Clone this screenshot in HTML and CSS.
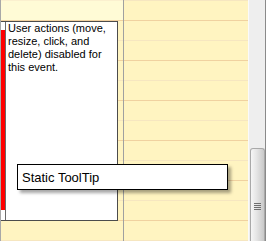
FILE: index.html
```html
<!DOCTYPE html>
<html lang="en">
<head>
    <meta charset="UTF-8">
    <title>Scheduler - static tooltip</title>
    <link rel="stylesheet" href="styles.css">
</head>
<body>
    <div class="scheduler">
        <div class="day-column day-left">
            <div class="slot slot-first"></div>
            <div class="slot hour"></div>
            <div class="slot"></div>
            <div class="slot hour"></div>
            <div class="slot"></div>
            <div class="slot hour"></div>
            <div class="slot"></div>
            <div class="slot hour"></div>
            <div class="slot"></div>
            <div class="slot hour"></div>
            <div class="slot"></div>
            <div class="slot hour"></div>
            <div class="slot"></div>

            <div class="appointment">
                <div class="time-strip">
                    <div class="time-bar"></div>
                </div>
                <div class="appointment-text">User actions (move, resize, click, and delete) disabled for this event.</div>
            </div>
        </div>

        <div class="day-column day-right">
            <div class="slot"></div>
            <div class="slot hour"></div>
            <div class="slot"></div>
            <div class="slot hour"></div>
            <div class="slot"></div>
            <div class="slot hour"></div>
            <div class="slot"></div>
            <div class="slot hour"></div>
            <div class="slot"></div>
            <div class="slot hour"></div>
            <div class="slot"></div>
            <div class="slot hour"></div>
            <div class="slot"></div>
        </div>

        <div class="scrollbar">
            <div class="scroll-thumb">
                <div class="grip"></div>
            </div>
        </div>

        <div class="tooltip">Static ToolTip</div>
    </div>
</body>
</html>
```

FILE: styles.css
```css
* {
    margin: 0;
    padding: 0;
    box-sizing: border-box;
}

body {
    font-family: 'Liberation Sans', Arial, sans-serif;
    overflow: hidden;
    width: 266px;
    height: 241px;
    background: #fff4c1;
}

.scheduler {
    position: relative;
    display: flex;
    height: 241px;
}

/* day columns */
.day-column {
    display: flex;
    flex-direction: column;
    overflow: hidden;
    background: #fff4c1;
}

.day-left {
    position: relative;
    width: 124px;
    border-left: 1px solid #a8a8a8;
    border-right: 1px solid #a0a0a0;
}

.day-right {
    width: 124px;
}

.slot {
    flex: none;
    height: 20px;
    border-top: 1px solid #f6e6c0;
}

.slot.hour {
    border-top-color: #f0d1a0;
}

.slot-first {
    background: #fffbd6;
    border-top-color: #fbf0cf;
}

/* appointment */
.appointment {
    position: absolute;
    left: -1px;
    top: 21px;
    width: 118px;
    height: 200px;
    display: flex;
    background: #fff;
    border: 1px solid #4c4c4c;
    border-left: none;
}

.time-strip {
    width: 6px;
    padding-left: 1px;
    border-right: 1px solid #6a6a6a;
}

.time-bar {
    width: 4px;
    height: 180px;
    margin-top: 8px;
    background: #ff0000;
}

.appointment-text {
    flex: 1;
    padding: 0 4px 0 2px;
    font-size: 11px;
    line-height: 13px;
    color: #000;
}

/* scrollbar */
.scrollbar {
    width: 18px;
    display: flex;
    flex-direction: column;
    padding-top: 148px;
    padding-left: 1px;
    background: #eeeeee;
    border-left: 1px solid #fafafa;
    border-right: 1px solid #8a8a8a;
}

.scroll-thumb {
    flex: 1;
    width: 15px;
    display: flex;
    justify-content: center;
    padding-top: 54px;
    border: 1px solid #a9a9a9;
    border-bottom: none;
    border-radius: 3px 3px 0 0;
    background: linear-gradient(to right, #f6f6f6 0%, #e4e4e4 45%, #c9c9c9 100%);
}

.grip {
    width: 7px;
    height: 8px;
    background: repeating-linear-gradient(to bottom, #6e6e6e 0, #6e6e6e 1px, transparent 1px, transparent 2px);
}

/* tooltip */
.tooltip {
    position: absolute;
    left: 17px;
    top: 164px;
    width: 211px;
    height: 26px;
    padding: 2px 0 0 4px;
    font-size: 13px;
    line-height: 22px;
    color: #000;
    background: #fff;
    border: 1px solid #000;
    box-shadow: 3px 3px 3px rgba(0, 0, 0, 0.35);
}
```
